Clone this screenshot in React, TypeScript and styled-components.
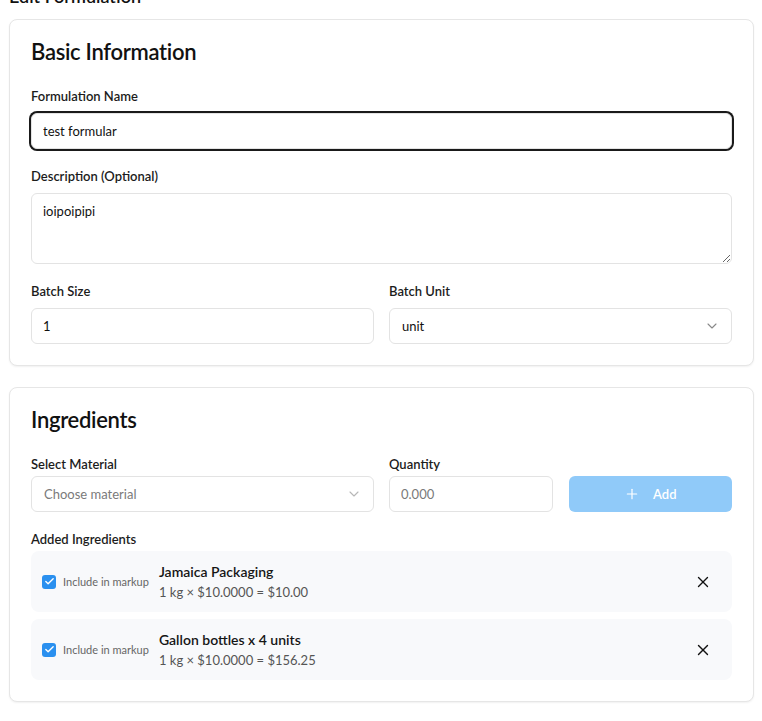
import React from 'react'
import styled, { createGlobalStyle } from 'styled-components'
import { ChevronDown, Plus, X, Check } from 'lucide-react'

const GlobalStyle = createGlobalStyle`
  * { box-sizing: border-box; }
  html, body {
    margin: 0;
    background: #fff;
    font-family: Lato, "Noto Sans", sans-serif;
    color: #111;
  }
`

const Page = styled.div`
  padding: 0 8px 40px 9px;
  display: flex;
  flex-direction: column;
  gap: 21px;
`

const PageTitle = styled.h1`
  margin: -16px 0 -10px;
  font-size: 18px;
  line-height: 24px;
  font-weight: 600;
`

const Card = styled.section`
  border: 1px solid #e6e6e6;
  border-radius: 8px;
  box-shadow: 0 1px 2px rgba(0, 0, 0, 0.06);
  padding: 17px 21px 21px;
  background: #fff;
`

const CardTitle = styled.h2`
  margin: 0 0 19px;
  font-size: 22px;
  line-height: 30px;
  font-weight: 600;
  letter-spacing: -0.3px;
  color: #111;
`

const Field = styled.div<{ $tight?: boolean }>`
  display: flex;
  flex-direction: column;
  gap: ${p => (p.$tight ? '2px' : '7px')};
`

const Stack = styled.div`
  display: flex;
  flex-direction: column;
  gap: 17px;
`

const TwoCols = styled.div`
  display: grid;
  grid-template-columns: 1fr 1fr;
  gap: 15px;
`

const Label = styled.label`
  font-size: 13px;
  line-height: 20px;
  font-weight: 600;
  color: #1c1c1c;
`

const TextInput = styled.input<{ $focused?: boolean }>`
  height: 36px;
  width: 100%;
  padding: 0 11px;
  border: 1px solid #e3e3e3;
  border-radius: 6px;
  font: inherit;
  font-size: 13px;
  color: #111;
  background: #fff;
  outline: none;
  box-shadow: ${p => (p.$focused ? '0 0 0 2px #1a1a1a' : 'none')};

  &::placeholder {
    color: #7a7a7a;
  }
`

const TextArea = styled.textarea`
  height: 71px;
  width: 100%;
  padding: 8px 11px;
  border: 1px solid #e3e3e3;
  border-radius: 6px;
  font: inherit;
  font-size: 13px;
  line-height: 18px;
  color: #111;
  outline: none;
  resize: vertical;
`

const SelectBox = styled.div<{ $placeholder?: boolean }>`
  height: 36px;
  display: flex;
  align-items: center;
  justify-content: space-between;
  padding: 0 11px 0 12px;
  border: 1px solid #e3e3e3;
  border-radius: 6px;
  font-size: 13px;
  color: ${p => (p.$placeholder ? '#7a7a7a' : '#111')};

  svg {
    color: #888;
    opacity: ${p => (p.$placeholder ? 0.6 : 1)};
  }
`

const QtyRow = styled.div`
  display: grid;
  grid-template-columns: 1fr 1fr;
  gap: 16px;
  align-items: end;
`

const AddButton = styled.button`
  height: 36px;
  border: none;
  border-radius: 6px;
  background: #90caf9;
  color: #fff;
  font: inherit;
  font-size: 13px;
  font-weight: 600;
  display: flex;
  align-items: center;
  justify-content: center;
  gap: 13px;
  cursor: not-allowed;
`

const IngredientList = styled.div`
  display: flex;
  flex-direction: column;
  gap: 7px;
`

const IngredientRow = styled.div`
  display: flex;
  align-items: center;
  min-height: 61px;
  padding: 10px 13px 10px 11px;
  background: #f8f9fb;
  border-radius: 8px;
`

const MarkupToggle = styled.label`
  display: flex;
  align-items: center;
  gap: 7px;
  font-size: 11px;
  color: #666;
  margin-right: 10px;
`

const CheckBox = styled.span`
  width: 14px;
  height: 14px;
  border-radius: 3px;
  background: #2a90ef;
  display: inline-flex;
  align-items: center;
  justify-content: center;
  color: #fff;
`

const IngredientInfo = styled.div`
  flex: 1;
  display: flex;
  flex-direction: column;
`

const IngredientName = styled.span`
  font-size: 14px;
  line-height: 20px;
  font-weight: 600;
  color: #151515;
`

const IngredientCalc = styled.span`
  font-size: 13px;
  line-height: 20px;
  color: #555;
`

const RemoveButton = styled.button`
  width: 32px;
  height: 32px;
  border: none;
  background: transparent;
  display: flex;
  align-items: center;
  justify-content: center;
  color: #111;
  padding: 0;
`

const ingredients = [
  { name: 'Jamaica Packaging', calc: '1 kg × $10.0000 = $10.00' },
  { name: 'Gallon bottles x 4 units', calc: '1 kg × $10.0000 = $156.25' },
]

export default function App() {
  return (
    <>
      <GlobalStyle />
      <Page>
        <PageTitle>Edit Formulation</PageTitle>

        <Card>
          <CardTitle>Basic Information</CardTitle>
          <Stack>
            <Field>
              <Label>Formulation Name</Label>
              <TextInput $focused defaultValue="test formular" />
            </Field>
            <Field>
              <Label>Description (Optional)</Label>
              <TextArea defaultValue="ioipoipipi" />
            </Field>
            <TwoCols>
              <Field>
                <Label>Batch Size</Label>
                <TextInput defaultValue="1" />
              </Field>
              <Field>
                <Label>Batch Unit</Label>
                <SelectBox>
                  <span>unit</span>
                  <ChevronDown size={16} strokeWidth={1.6} />
                </SelectBox>
              </Field>
            </TwoCols>
          </Stack>
        </Card>

        <Card>
          <CardTitle>Ingredients</CardTitle>
          <Stack>
            <TwoCols>
              <Field $tight>
                <Label>Select Material</Label>
                <SelectBox $placeholder>
                  <span>Choose material</span>
                  <ChevronDown size={16} strokeWidth={1.6} />
                </SelectBox>
              </Field>
              <QtyRow>
                <Field $tight>
                  <Label>Quantity</Label>
                  <TextInput placeholder="0.000" />
                </Field>
                <AddButton disabled>
                  <Plus size={16} strokeWidth={1.8} />
                  Add
                </AddButton>
              </QtyRow>
            </TwoCols>
            <Field $tight>
              <Label>Added Ingredients</Label>
              <IngredientList>
                {ingredients.map(item => (
                  <IngredientRow key={item.name}>
                    <MarkupToggle>
                      <CheckBox>
                        <Check size={11} strokeWidth={3} />
                      </CheckBox>
                      Include in markup
                    </MarkupToggle>
                    <IngredientInfo>
                      <IngredientName>{item.name}</IngredientName>
                      <IngredientCalc>{item.calc}</IngredientCalc>
                    </IngredientInfo>
                    <RemoveButton aria-label="Remove">
                      <X size={18} strokeWidth={1.8} />
                    </RemoveButton>
                  </IngredientRow>
                ))}
              </IngredientList>
            </Field>
          </Stack>
        </Card>
      </Page>
    </>
  )
}
